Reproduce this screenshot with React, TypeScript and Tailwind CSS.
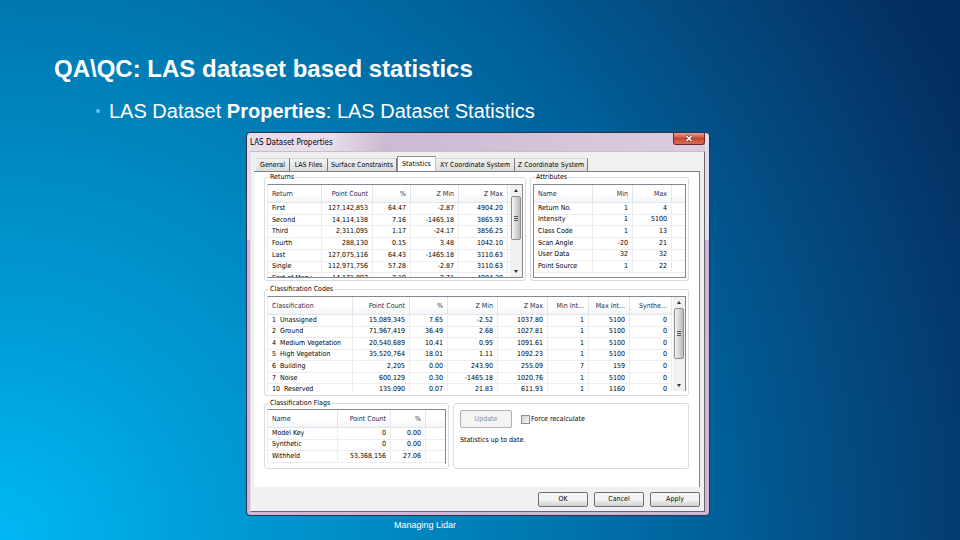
import React from "react";

type Column = { label: string; width: string };

const tabs = [
  { label: "General", width: "w-[34px]" },
  { label: "LAS Files", width: "w-[38px]" },
  { label: "Surface Constraints", width: "w-[69px]" },
  { label: "Statistics", width: "w-[39px]" },
  { label: "XY Coordinate System", width: "w-[79px]" },
  { label: "Z Coordinate System", width: "w-[73px]" },
];

const returnColumns: Column[] = [
  { label: "Return", width: "w-[54px]" },
  { label: "Point Count", width: "w-[51px]" },
  { label: "%", width: "w-[38px]" },
  { label: "Z Min", width: "w-[48px]" },
  { label: "Z Max", width: "w-[49px]" },
];

const returnRows = [
  ["First", "127,142,853", "64.47", "-2.87", "4904.20"],
  ["Second", "14,114,138", "7.16", "-1465.18", "3865.93"],
  ["Third", "2,311,095", "1.17", "-24.17", "3856.25"],
  ["Fourth", "288,130", "0.15", "3.48", "1042.10"],
  ["Last", "127,075,116", "64.43", "-1465.18", "3110.63"],
  ["Single", "112,971,756", "57.28", "-2.87", "3110.63"],
  ["First of Many", "14,171,097", "7.19", "-2.71", "4904.20"],
];

const attributeColumns: Column[] = [
  { label: "Name", width: "w-[59px]" },
  { label: "Min", width: "w-[40px]" },
  { label: "Max", width: "w-[39px]" },
];

const attributeRows = [
  ["Return No.", "1", "4"],
  ["Intensity", "1", "5100"],
  ["Class Code", "1", "13"],
  ["Scan Angle", "-20", "21"],
  ["User Data", "32", "32"],
  ["Point Source", "1", "22"],
];

const codeColumns: Column[] = [
  { label: "Classification", width: "w-[85px]" },
  { label: "Point Count", width: "w-[57px]" },
  { label: "%", width: "w-[38px]" },
  { label: "Z Min", width: "w-[50px]" },
  { label: "Z Max", width: "w-[50px]" },
  { label: "Min Int...", width: "w-[41px]" },
  { label: "Max Int...", width: "w-[41px]" },
  { label: "Synthe...", width: "w-[42px]" },
];

const codeRows = [
  ["1  Unassigned", "15,089,345", "7.65", "-2.52", "1037.80", "1", "5100", "0"],
  ["2  Ground", "71,967,419", "36.49", "2.68", "1027.81", "1", "5100", "0"],
  ["4  Medium Vegetation", "20,540,689", "10.41", "0.95", "1091.61", "1", "5100", "0"],
  ["5  High Vegetation", "35,520,764", "18.01", "1.11", "1092.23", "1", "5100", "0"],
  ["6  Building", "2,205", "0.00", "243.90", "255.09", "7", "159", "0"],
  ["7  Noise", "600,129", "0.30", "-1465.18", "1020.76", "1", "5100", "0"],
  ["10  Reserved", "135,090", "0.07", "21.83", "611.93", "1", "1160", "0"],
];

const flagColumns: Column[] = [
  { label: "Name", width: "w-[70px]" },
  { label: "Point Count", width: "w-[53px]" },
  { label: "%", width: "w-[35px]" },
];

const flagRows = [
  ["Model Key", "0", "0.00"],
  ["Synthetic", "0", "0.00"],
  ["Withheld", "53,368,156", "27.06"],
];

function DataTable({ columns, rows, height }: { columns: Column[]; rows: string[][]; height: string }) {
  return (
    <table className={`w-full table-fixed border-separate border-spacing-0 ${height}`}>
      <colgroup>
        {columns.map((c) => (
          <col key={c.label} className={c.width} />
        ))}
        <col />
      </colgroup>
      <thead>
        <tr className="h-[18px] bg-linear-to-b from-white from-50% to-[#f1f3f6]">
          {columns.map((c, i) => (
            <th
              key={c.label}
              scope="col"
              className={`overflow-hidden border-r border-b border-[#e1e6ee] px-1 pt-px font-normal text-[#1c2a4a] ${i === 0 ? "text-left" : "text-right"}`}
            >
              {c.label}
            </th>
          ))}
          <td className="border-b border-[#e1e6ee]" />
        </tr>
      </thead>
      <tbody>
        {rows.map((row) => (
          <tr key={row[0]}>
            {row.map((cell, i) => (
              <td
                key={i}
                className={`border-r border-b border-[#ededf0] px-1 whitespace-pre ${i === 0 ? "text-left" : "text-right"}`}
              >
                {cell}
              </td>
            ))}
            <td className="border-b border-[#ededf0]" />
          </tr>
        ))}
      </tbody>
    </table>
  );
}

function ScrollBar({ thumb }: { thumb: string }) {
  return (
    <div className="flex w-[12px] shrink-0 flex-col items-center bg-[#f0f0f0] py-1">
      <svg viewBox="0 0 4 3" className="h-[3px] w-1 shrink-0">
        <path d="M2 0 4 3H0z" fill="#333" />
      </svg>
      <div className={`mt-1 flex w-[10px] shrink-0 flex-col items-center justify-center gap-px rounded-xs border border-[#8f8f8f] bg-linear-to-r from-[#f6f6f6] to-[#b9b9bd] ${thumb}`}>
        <span className="h-px w-1 bg-[#555]" />
        <span className="h-px w-1 bg-[#555]" />
        <span className="h-px w-1 bg-[#555]" />
      </div>
      <svg viewBox="0 0 4 3" className="mt-auto h-[3px] w-1 shrink-0">
        <path d="M0 0h4L2 3z" fill="#333" />
      </svg>
    </div>
  );
}

function Group({ title, className, children }: { title: string; className: string; children: React.ReactNode }) {
  return (
    <fieldset className={`min-w-0 rounded-[3px] border border-[#d3dde2] px-[2px] ${className}`}>
      <legend className="ml-[2px] px-px leading-[8px]">{title}</legend>
      {children}
    </fieldset>
  );
}

function DialogButton({ label }: { label: string }) {
  return (
    <button
      type="button"
      className="h-[15px] w-[50px] rounded-[2px] border border-[#707070] bg-linear-to-b from-[#f4f4f4] from-50% to-[#cfcfcf]"
    >
      {label}
    </button>
  );
}

function PropertiesDialog() {
  return (
    <section
      aria-label="LAS Dataset Properties"
      className="mx-auto w-[464px] rounded-[4px] border border-[#33304a] bg-linear-to-b from-[#e6dcea] from-28% to-[#cbb8d3] to-28% pr-1 pb-[3px] pl-[3px] font-['DejaVu_Sans_Condensed','DejaVu_Sans',sans-serif] text-[7px] leading-[9px] text-black"
    >
      <header className="flex h-[18px] items-start justify-between bg-linear-105 from-[#e8deeb] from-18% via-[#cdb9d2] via-30% to-[#dccde1]">
        <h2 className="pt-[5px] text-[8px]">LAS Dataset Properties</h2>
        <button
          type="button"
          aria-label="Close"
          className="flex h-[12px] w-[32px] items-center justify-center rounded-b-[3px] border border-t-0 border-[#6b2a2a] bg-linear-to-b from-[#e2a093] via-[#c8452f] via-50% to-[#d0705a]"
        >
          <svg viewBox="0 0 8 7" className="h-[7px] w-2">
            <path d="M1.5 1 6.5 6M6.5 1 1.5 6" stroke="#5a2a2a" strokeWidth="2.6" />
            <path d="M1.5 1 6.5 6M6.5 1 1.5 6" stroke="#fff" strokeWidth="1.6" />
          </svg>
        </button>
      </header>

      <div className="border border-[#6a6078] border-t-[#c9bccf] border-l-[#e4dce8] bg-[#f0f0f0] pt-1 pr-1 pb-1 pl-[3px]">
        <nav role="tablist" className="flex items-end pl-[2px]">
          {tabs.map((tab) => {
            const active = tab.label === "Statistics";
            return (
              <button
                key={tab.label}
                type="button"
                role="tab"
                aria-selected={active}
                className={`flex shrink-0 items-center justify-center border-t border-r whitespace-nowrap ${tab.width} ${
                  active
                    ? "h-[15px] border-l border-[#898c95] border-r-[#c5c7cc] bg-white"
                    : "h-[13px] border-t-[#d5d6da] border-r-[#77797f] bg-linear-to-b from-[#f2f2f2] to-[#dcdcdc]"
                }`}
              >
                {tab.label}
              </button>
            );
          })}
        </nav>

        <div className="flex h-[316px] flex-col border-t border-r border-[#7d8087] bg-white px-[10px] pt-px">
          <div className="flex gap-1">
            <Group title="Returns" className="w-[262px] pt-[3px] pb-[2px]">
              <div className="flex h-[94px] overflow-hidden border border-[#828790] border-l-[#e3e9ef]">
                <DataTable columns={returnColumns} rows={returnRows} height="h-[100px]" />
                <ScrollBar thumb="h-[44px]" />
              </div>
            </Group>
            <Group title="Attributes" className="flex-1 pt-[3px] pb-[2px]">
              <div className="h-[94px] overflow-hidden border border-[#828790]">
                <DataTable columns={attributeColumns} rows={attributeRows} height="h-[88px]" />
              </div>
            </Group>
          </div>

          <Group title="Classification Codes" className="mt-1 pt-[3px] pb-1">
            <div className="flex h-[95px] overflow-hidden border-t border-r border-l border-[#828790] border-l-[#e3e9ef]">
              <DataTable columns={codeColumns} rows={codeRows} height="h-[99px]" />
              <ScrollBar thumb="h-[51px]" />
            </div>
          </Group>

          <div className="mt-[3px] flex gap-1">
            <Group title="Classification Flags" className="w-[185px] pt-[2px] pb-1">
              <div className="h-[55px] overflow-hidden border-t border-r border-l border-[#828790] border-l-[#e3e9ef]">
                <DataTable columns={flagColumns} rows={flagRows} height="h-[53px]" />
              </div>
            </Group>
            <div className="mt-1 flex-1 rounded-[3px] border border-[#d3dde2] px-[6px] pt-[6px]">
              <div className="flex items-center">
                <button
                  type="button"
                  disabled
                  className="h-[18px] w-[52px] rounded-[2px] border border-[#adb2b5] bg-[#f4f4f4] text-[#8a8d93]"
                >
                  Update
                </button>
                <label className="ml-[9px] flex items-center gap-px">
                  <input
                    type="checkbox"
                    className="size-[9px] appearance-none border border-[#8e8f8f] bg-linear-to-br from-[#cfd2d6] to-[#f6f6f6]"
                  />
                  Force recalculate
                </label>
              </div>
              <p className="mt-2">Statistics up to date.</p>
            </div>
          </div>
        </div>

        <footer className="mt-[5px] flex justify-end gap-[6px]">
          <DialogButton label="OK" />
          <DialogButton label="Cancel" />
          <DialogButton label="Apply" />
        </footer>
      </div>
    </section>
  );
}

export default function App() {
  return (
    <main className="min-h-screen bg-[radial-gradient(circle_farthest-corner_at_0%_100%,#00b8f4_0%,#0099d3_22%,#007bb3_46%,#00609a_65%,#034f85_75%,#043c70_87%,#032e62_96%)] font-['Liberation_Sans',Arial,sans-serif] text-white">
      <h1 className="pt-[55px] pl-[54px] text-2xl leading-[28px] font-bold">QA\QC: LAS dataset based statistics</h1>
      <ul className="mt-4 pl-[96px]">
        <li className="flex items-center text-xl leading-[24px]">
          <span className="mr-[9px] size-1 rounded-full bg-[#5cc8f0]" />
          <p>
            LAS Dataset <strong>Properties</strong>: LAS Dataset Statistics
          </p>
        </li>
      </ul>
      <div className="pt-[9px] pr-1">
        <PropertiesDialog />
      </div>
      <p className="pt-[3px] pr-[110px] text-center text-[9px] leading-[12px]">Managing Lidar</p>
    </main>
  );
}
